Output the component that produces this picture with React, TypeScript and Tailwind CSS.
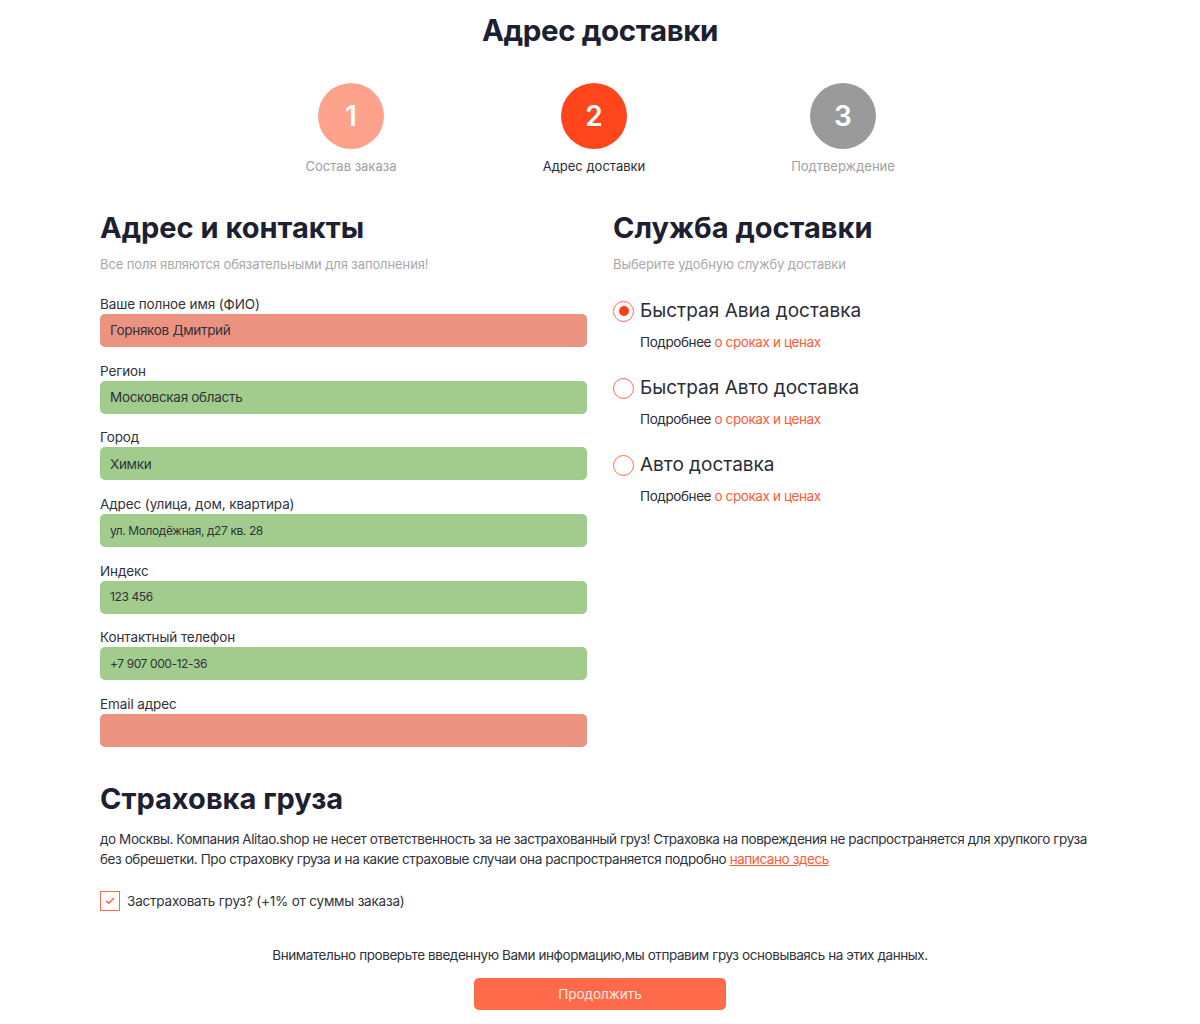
import React from "react";

const fields: { label: string; value: string; ok: boolean; small?: boolean }[] = [
  { label: "Ваше полное имя (ФИО)", value: "Горняков Дмитрий", ok: false },
  { label: "Регион", value: "Московская область", ok: true },
  { label: "Город", value: "Химки", ok: true },
  { label: "Адрес (улица, дом, квартира)", value: "ул. Молодёжная, д27 кв. 28", ok: true, small: true },
  { label: "Индекс", value: "123 456", ok: true, small: true },
  { label: "Контактный телефон", value: "+7 907 000-12-36", ok: true, small: true },
  { label: "Email адрес", value: "", ok: false },
];

const services = [
  { name: "Быстрая Авиа доставка", checked: true },
  { name: "Быстрая Авто доставка", checked: false },
  { name: "Авто доставка", checked: false },
];

export default function App() {
  return (
    <div
      className="w-[1200px] h-[1024px] bg-white text-[#2a2d36] overflow-hidden"
      style={{ fontFamily: "Inter, 'Noto Sans', sans-serif" }}
    >
      <h1 className="pt-[11px] text-center text-[29.5px] leading-[38px] font-bold text-[#1c2030] tracking-[-0.4px]">
        Адрес доставки
      </h1>

      {/* Steps */}
      <div className="flex mt-[34px]">
        <div className="ml-[271px] w-[160px] flex flex-col items-center">
          <div className="w-[66px] h-[66px] rounded-full bg-[#ffa28c] flex items-center justify-center text-white text-[28px] font-semibold">
            1
          </div>
          <div className="mt-[7px] text-[13px] leading-[20px] text-[#a0a0a0]">Состав заказа</div>
        </div>
        <div className="ml-[83px] w-[160px] flex flex-col items-center">
          <div className="w-[66px] h-[66px] rounded-full bg-[#ff451c] flex items-center justify-center text-white text-[28px] font-semibold">
            2
          </div>
          <div className="mt-[7px] text-[13px] leading-[20px] text-[#2a2d36]">Адрес доставки</div>
        </div>
        <div className="ml-[89px] w-[160px] flex flex-col items-center">
          <div className="w-[66px] h-[66px] rounded-full bg-[#9a9a9a] flex items-center justify-center text-white text-[28px] font-semibold">
            3
          </div>
          <div className="mt-[7px] text-[13px] leading-[20px] text-[#a0a0a0]">Подтверждение</div>
        </div>
      </div>

      {/* Two columns */}
      <div className="flex ml-[100px] mt-[34px]">
        <div className="w-[487px]">
          <h2 className="text-[29px] leading-[36px] font-bold text-[#1c2030]">Адрес и контакты</h2>
          <p className="mt-[9px] text-[13px] leading-[18px] text-[#a8a8a8] tracking-[-0.1px]">
            Все поля являются обязательными для заполнения!
          </p>
          <div className="mt-[21px] flex flex-col gap-[13.7px]">
            {fields.map((f) => (
              <div key={f.label}>
                <div className="text-[13.5px] leading-[20px] text-[#2f323a] tracking-[-0.1px]">{f.label}</div>
                <div
                  className={`h-[33px] rounded-[5px] px-[10px] flex items-center text-[#2f323a] ${
                    f.ok ? "bg-[#a2cc8d]" : "bg-[#ec9281]"
                  } ${f.small ? "text-[12px] tracking-[-0.4px]" : "text-[13.5px] tracking-[-0.3px]"}`}
                >
                  {f.value}
                </div>
              </div>
            ))}
          </div>
        </div>

        <div className="ml-[26px] w-[487px]">
          <h2 className="text-[29px] leading-[36px] font-bold text-[#1c2030]">Служба доставки</h2>
          <p className="mt-[9px] text-[13px] leading-[18px] text-[#a8a8a8] tracking-[-0.1px]">
            Выберите удобную службу доставки
          </p>
          <div className="mt-[24px] flex flex-col gap-[22px]">
            {services.map((s) => (
              <div key={s.name}>
                <div className="flex items-center h-[28px]">
                  <div className="w-[21px] h-[21px] rounded-full border-[1.5px] border-[#ff6b4a] flex items-center justify-center">
                    {s.checked && <div className="w-[10px] h-[10px] rounded-full bg-[#ff3d14]" />}
                  </div>
                  <span className="ml-[6px] text-[19px] leading-[28px] text-[#2a2d36]">{s.name}</span>
                </div>
                <div className="mt-[7px] ml-[27px] text-[13.5px] leading-[20px] text-[#2a2d36] tracking-[-0.4px]">
                  Подробнее <span className="text-[#ff5a36]">о сроках и ценах</span>
                </div>
              </div>
            ))}
          </div>
        </div>
      </div>

      {/* Insurance */}
      <div className="ml-[100px] w-[1000px] mt-[34px]">
        <h2 className="text-[29px] leading-[36px] font-bold text-[#1c2030]">Страховка груза</h2>
        <p className="mt-[12px] text-[13.5px] leading-[20px] text-[#2f323a] tracking-[-0.42px]">
          до Москвы. Компания Alitao.shop не несет ответственность за не застрахованный груз! Страховка на повреждения не
          распространяется для хрупкого груза без обрешетки. Про страховку груза и на какие страховые случаи она
          распространяется подробно <span className="text-[#ff5a36] underline">написано здесь</span>
        </p>
        <div className="mt-[22px] flex items-center">
          <div className="w-[20px] h-[20px] border border-[#ff6b4a] flex items-center justify-center">
            <svg width="10" height="8" viewBox="0 0 10 8" fill="none">
              <path d="M1.5 4.2 L3.8 6.3 L8.5 1.6" stroke="#ff5a36" strokeWidth="1.4" strokeLinecap="round" strokeLinejoin="round" />
            </svg>
          </div>
          <span className="ml-[7px] text-[13.5px] leading-[20px] text-[#2f323a] tracking-[-0.2px]">
            Застраховать груз? (+1% от суммы заказа)
          </span>
        </div>
      </div>

      {/* Footer */}
      <div className="mt-[34px] flex flex-col items-center">
        <p className="text-[13.5px] leading-[20px] text-[#2f323a] tracking-[-0.42px]">
          Внимательно проверьте введенную Вами информацию,мы отправим груз основываясь на этих данных.
        </p>
        <button className="mt-[13px] w-[252px] h-[32px] rounded-[5px] bg-[#ff6b4a] text-[#ffe9e2] text-[13.5px]">
          Продолжить
        </button>
      </div>
    </div>
  );
}
